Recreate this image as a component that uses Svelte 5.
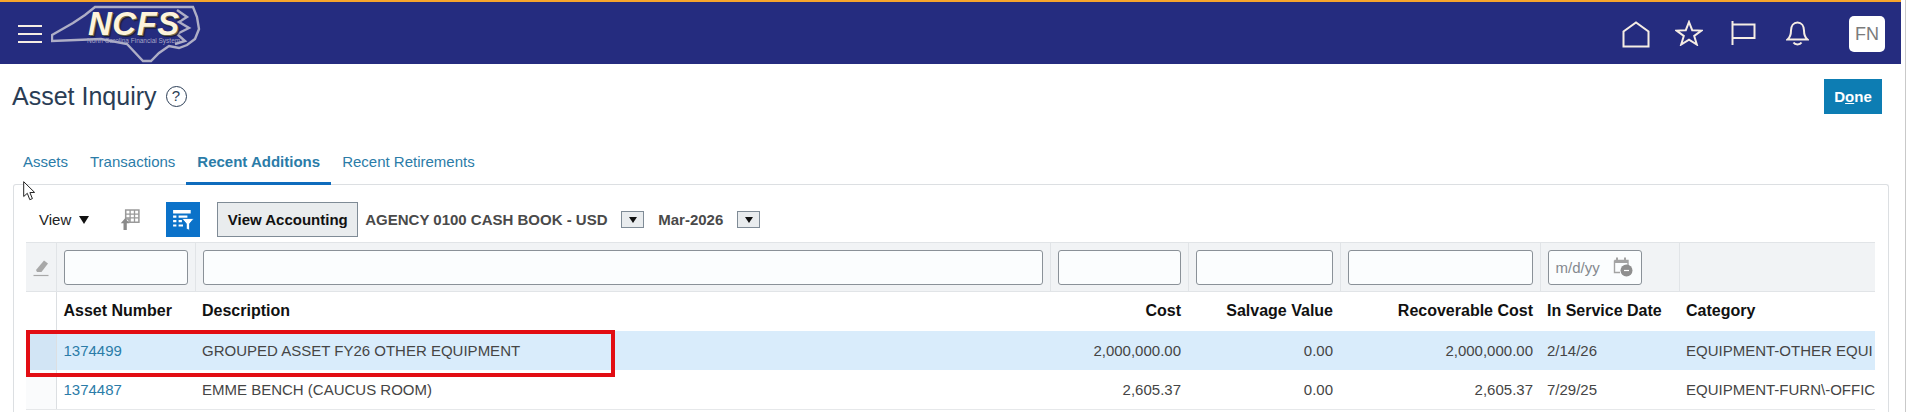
<script>
  const tabs = [
    { label: 'Assets' },
    { label: 'Transactions' },
    { label: 'Recent Additions', active: true },
    { label: 'Recent Retirements' }
  ]

  const columns = [
    { key: 'number', label: 'Asset Number', width: 139 },
    { key: 'description', label: 'Description', width: 855 },
    { key: 'cost', label: 'Cost', width: 138, right: true },
    { key: 'salvage', label: 'Salvage Value', width: 152, right: true },
    { key: 'recoverable', label: 'Recoverable Cost', width: 200, right: true },
    { key: 'date', label: 'In Service Date', width: 139, isDate: true },
    { key: 'category', label: 'Category', width: 196 }
  ]

  const rows = [
    {
      number: '1374499',
      description: 'GROUPED ASSET FY26 OTHER EQUIPMENT',
      cost: '2,000,000.00',
      salvage: '0.00',
      recoverable: '2,000,000.00',
      date: '2/14/26',
      category: 'EQUIPMENT-OTHER EQUI',
      selected: true
    },
    {
      number: '1374487',
      description: 'EMME BENCH (CAUCUS ROOM)',
      cost: '2,605.37',
      salvage: '0.00',
      recoverable: '2,605.37',
      date: '7/29/25',
      category: 'EQUIPMENT-FURN\\-OFFIC'
    }
  ]
</script>

<div class="page">
  <header class="topbar">
    <button class="burger" aria-label="Menu"><span></span><span></span><span></span></button>
    <div class="logo">
      <svg class="map" viewBox="0 0 150 60" width="150" height="60" aria-hidden="true">
        <path d="M1 32 L8 28 L22 20 L34 12 L44 4 L142 4 L146 14 L148 26 L144 36 L136 42 L128 45 L118 43 L108 50 L100 58 L92 58 L76 41 L50 36 L1 38 Z" fill="none" stroke="#aeaec6" stroke-width="2.4" />
        <path d="M126 7 L136 14 L128 19 L138 25 L126 31 L134 38 L124 41" fill="none" stroke="#aeaec6" stroke-width="2.4" />
      </svg>
      <span class="ncfs">NCFS</span>
      <span class="tagline">North Carolina Financial System</span>
    </div>
    <nav class="actions">
      <svg class="home" viewBox="0 0 28 27" width="28" height="27" aria-hidden="true">
        <path d="M1.5 25.5 V10.5 L14 1.5 L26.5 10.5 V25.5 Z" />
      </svg>
      <svg class="star" viewBox="0 0 28 26" width="28" height="26" aria-hidden="true">
        <path d="M14 2 L17.2 10.2 L26.5 10.6 L19.2 16 L21.8 24.5 L14 19.6 L6.2 24.5 L8.8 16 L1.5 10.6 L10.8 10.2 Z" />
      </svg>
      <svg class="flag" viewBox="0 0 25 24" width="25" height="24" aria-hidden="true">
        <path d="M1.5 0 V24 M1.5 3.5 H23.5 V17 H1.5" />
      </svg>
      <svg class="bell" viewBox="0 0 23 25" width="23" height="25" aria-hidden="true">
        <path d="M1.5 18.5 H21.5 C18.5 16 18 13 18 9.5 C18 5 15.5 1.5 11.5 1.5 C7.5 1.5 5 5 5 9.5 C5 13 4.5 16 1.5 18.5 Z M7.5 21.5 C9 24 14 24 15.5 21.5" />
      </svg>
      <span class="avatar">FN</span>
    </nav>
  </header>

  <div class="title-row">
    <h1>Asset Inquiry <span class="help">?</span></h1>
    <button class="done">D<u>o</u>ne</button>
  </div>

  <ul class="tabs">
    {#each tabs as tab}
      <li class:active={tab.active}>{tab.label}</li>
    {/each}
  </ul>

  <section class="panel">
    <div class="toolbar">
      <span class="view">View <i class="caret"></i></span>
      <svg class="detach" viewBox="0 0 20 20" width="22" height="22" aria-hidden="true">
        <path d="M7 1 H19 V12 H10 V9 H7 Z" fill="none" stroke="#9a9a9a" stroke-width="1.4" />
        <path d="M7 4.6 H19 M7 8 H19 M11 1 V12 M15 1 V12" stroke="#9a9a9a" stroke-width="1.2" />
        <path d="M1 19 H5 V13 H2.5 L6.5 8.5 L10.5 13 H8 V19" fill="#8a8a8a" />
      </svg>
      <button class="filter" aria-label="Query by example">
        <svg viewBox="0 0 20 20" width="22" height="22" aria-hidden="true">
          <path d="M1 1 H17 V4 H1 Z M1 6 H4 V8 H1 Z M6 6 H14 V8 H6 Z M1 10 H4 V12 H1 Z M6 10 H9 V12 H6 Z M1 14 H4 V16 H1 Z M6 14 H10 V16 H6 Z" fill="#fff" />
          <path d="M9 8.6 H20 L16 13.4 V19.5 L13 18 V13.4 Z" fill="#fff" stroke="#0b72c9" stroke-width="0.8" />
        </svg>
      </button>
      <button class="accounting">View Accounting</button>
      <span class="choice book">AGENCY 0100 CASH BOOK - USD</span>
      <button class="select" aria-label="Choose book"><i class="caret"></i></button>
      <span class="choice period">Mar-2026</span>
      <button class="select" aria-label="Choose period"><i class="caret"></i></button>
    </div>

    <div class="table-wrap">
      <table>
        <colgroup>
          <col style="width: 30px" />
          {#each columns as col}
            <col style="width: {col.width}px" />
          {/each}
        </colgroup>
        <thead>
          <tr class="filters">
            <th class="gutter">
              <svg viewBox="0 0 16 18" width="16" height="18" aria-hidden="true">
                <path d="M3 11 L11 1.5 L15 4.5 L8.5 13 H4 Z" fill="#a8a8a8" />
                <path d="M0.5 16.5 H15.5" stroke="#a8a8a8" stroke-width="1.2" />
              </svg>
            </th>
            {#each columns as col}
              <th>
                {#if col.isDate}
                  <div class="date-box">
                    <span>m/d/yy</span>
                    <svg viewBox="0 0 20 20" width="20" height="20" aria-hidden="true">
                      <path d="M1.5 3.5 H15 V8 M1.5 3.5 V15.5 H7" fill="none" stroke="#a3a3a3" stroke-width="1.4" />
                      <path d="M4 0.5 V4 M12 0.5 V4" stroke="#a3a3a3" stroke-width="2" />
                      <path d="M1.5 3.5 H15 V6 H1.5 Z" fill="#a3a3a3" />
                      <circle cx="13.5" cy="13.5" r="6" fill="#8f8f8f" />
                      <path d="M11 13.5 H16" stroke="#fff" stroke-width="1.2" />
                    </svg>
                  </div>
                {:else if col.key !== 'category'}
                  <div class="filter-box"></div>
                {/if}
              </th>
            {/each}
          </tr>
          <tr class="heads">
            <th class="gutter"></th>
            {#each columns as col}
              <th class:right={col.right}>{col.label}</th>
            {/each}
          </tr>
        </thead>
        <tbody>
          {#each rows as row}
            <tr class:selected={row.selected}>
              <td class="gutter"></td>
              {#each columns as col}
                <td class:right={col.right} class:link={col.key === 'number'}>{row[col.key]}</td>
              {/each}
            </tr>
          {/each}
        </tbody>
      </table>
      <div class="callout"></div>
    </div>
  </section>

  <svg class="cursor" viewBox="0 0 13 20" width="13" height="20" aria-hidden="true">
    <path d="M0.7 0.7 V15.5 L4.3 12.3 L6.8 18.7 L9.4 17.6 L6.9 11.6 L11.6 11.4 Z" fill="#fff" stroke="#222" stroke-width="1" />
  </svg>
</div>

<style>
  :global(body) {
    margin: 0;
    background: #fff;
    overflow: hidden;
  }

  .page {
    position: relative;
    width: 1901px;
    height: 412px;
    overflow: hidden;
    display: flex;
    flex-direction: column;
    font-family: "Liberation Sans", Arial, sans-serif;
    font-size: 15px;
    box-shadow: 4px 0 0 #fff, 5px 0 0 #c9c9c9;
  }

  button {
    font-family: inherit;
    padding: 0;
  }

  .topbar {
    flex: none;
    box-sizing: border-box;
    height: 64px;
    border-top: 2px solid #f8a52c;
    background: #252c7f;
    display: flex;
    align-items: center;
    padding-left: 18px;
  }

  .burger {
    width: 24px;
    height: 19px;
    margin-top: 2px;
    background: none;
    border: 0;
    display: flex;
    flex-direction: column;
    justify-content: space-between;
  }

  .burger span {
    display: block;
    height: 2.4px;
    background: #f6ede4;
  }

  .logo {
    position: relative;
    width: 150px;
    height: 60px;
    margin-left: 9px;
    margin-top: 0;
  }

  .map {
    position: absolute;
    left: 0;
    top: 0;
  }

  .ncfs {
    position: absolute;
    left: 37px;
    top: 7px;
    font: italic bold 33px/27px "Liberation Sans", Arial, sans-serif;
    letter-spacing: 0.5px;
    color: #fdf3dc;
    text-shadow: 1px 1px 0 #6f6a4a, 2px 2px 1px #1a1a3a;
  }

  .tagline {
    position: absolute;
    left: 36px;
    top: 34px;
    font-size: 6.5px;
    line-height: 7px;
    white-space: nowrap;
    color: #a5a5c5;
  }

  .actions {
    margin-left: auto;
    margin-right: 16px;
    display: flex;
    align-items: center;
  }

  .actions svg {
    fill: none;
    stroke: #f6ede4;
    stroke-width: 2;
  }

  .home { margin-top: 2px; }
  .star { margin-left: 25px; }
  .flag { margin-left: 28px; }
  .bell { margin-left: 30px; }

  .avatar {
    width: 36px;
    height: 36px;
    margin-left: 40px;
    margin-top: 2px;
    border-radius: 5px;
    background: #fff;
    color: #7b7b7b;
    font: 18px "Liberation Sans", Arial, sans-serif;
    display: flex;
    align-items: center;
    justify-content: center;
  }

  .title-row {
    flex: none;
    display: flex;
    justify-content: space-between;
    align-items: flex-start;
    padding: 15px 19px 0 12px;
  }

  h1 {
    margin: 0;
    font-size: 25px;
    line-height: 35px;
    font-weight: 400;
    color: #2a3d55;
    display: flex;
    align-items: center;
    gap: 9px;
  }

  .help {
    box-sizing: border-box;
    width: 21px;
    height: 21px;
    border: 1.5px solid #2a3d55;
    border-radius: 50%;
    font-size: 15px;
    line-height: 18px;
    text-align: center;
  }

  .done {
    width: 58px;
    height: 35px;
    border: 0;
    background: #0d7db3;
    color: #fff;
    font-size: 15px;
    font-weight: 700;
  }

  .tabs {
    flex: none;
    list-style: none;
    margin: 37px 0 -1px;
    padding: 0 0 0 12px;
    display: flex;
    position: relative;
    z-index: 1;
  }

  .tabs li {
    padding: 0 11px;
    height: 34px;
    line-height: 22px;
    box-sizing: border-box;
    color: #2b7ca8;
    border-bottom: 3px solid transparent;
  }

  .tabs li.active {
    font-weight: 700;
    border-bottom-color: #0f6cbd;
  }

  .panel {
    flex: 1;
    box-sizing: border-box;
    margin: 0 12px 0 13px;
    padding: 17px 13px 0 12px;
    border: 1px solid #dcdfe2;
    border-bottom: 0;
    border-radius: 3px 3px 0 0;
  }

  .toolbar {
    height: 35px;
    display: flex;
    align-items: center;
    color: #111;
  }

  .view {
    margin-left: 13px;
    display: flex;
    align-items: center;
    gap: 8px;
    color: #222;
  }

  .caret {
    display: block;
    width: 0;
    height: 0;
    border-left: 5.5px solid transparent;
    border-right: 5.5px solid transparent;
    border-top: 8px solid #111;
  }

  .detach {
    margin-left: 29px;
  }

  .filter {
    width: 34px;
    height: 35px;
    margin-left: 26px;
    border: 0;
    background: #0b72c9;
    display: flex;
    align-items: center;
    justify-content: center;
  }

  .accounting {
    width: 141px;
    height: 35px;
    margin-left: 17px;
    border: 1px solid #7f8b96;
    background: #e9ecee;
    color: #111;
    font-size: 15px;
    font-weight: 700;
  }

  .choice {
    font-weight: 700;
    color: #4a4a4a;
    white-space: nowrap;
  }

  .book {
    margin-left: 7px;
    width: 256px;
  }

  .period {
    margin-left: 14px;
    width: 79px;
  }

  .select {
    width: 23px;
    height: 17px;
    border: 1px solid #7f8b96;
    background: #e9ecee;
    display: flex;
    align-items: center;
    justify-content: center;
  }

  .select .caret {
    border-left-width: 4.5px;
    border-right-width: 4.5px;
    border-top-width: 6px;
  }

  .table-wrap {
    position: relative;
    margin-top: 5px;
  }

  table {
    width: 1849px;
    table-layout: fixed;
    border-collapse: collapse;
  }

  th, td {
    box-sizing: border-box;
    padding: 0 7px;
    white-space: nowrap;
    overflow: hidden;
    text-align: left;
  }

  th:last-child, td:last-child {
    padding-right: 0;
  }

  .right {
    text-align: right;
  }

  .filters th {
    height: 49px;
    background: #f1f3f5;
    border: 1px solid #e1e4e7;
    border-width: 1px 1px 1px 0;
    padding: 0 7px;
  }

  .filters th:first-child {
    border-left: 0;
  }

  .filters th:last-child {
    border-right: 0;
  }

  .filters svg {
    display: block;
  }

  .filters .gutter svg {
    margin: 1px auto 0;
  }

  .filter-box, .date-box {
    box-sizing: border-box;
    height: 35px;
    border: 1px solid #8a9198;
    border-radius: 3px;
    background: #fbfdfe;
  }

  .date-box {
    width: 94px;
    display: flex;
    align-items: center;
    justify-content: space-between;
    padding: 0 8px 0 7px;
    color: #84898e;
    font-weight: 400;
  }

  .heads th {
    height: 39px;
    color: #111;
    font-size: 16px;
    font-weight: 700;
    border-bottom: 0;
  }

  td {
    height: 39px;
    color: #454545;
    border-bottom: 1px solid #e6e8ea;
  }

  tbody tr:first-child td {
    border-bottom: 0;
  }

  tbody tr:last-child td {
    height: 40px;
    padding-top: 1px;
  }

  .gutter {
    padding: 0;
    border-right: 1px solid #dcdfe2;
  }

  td.gutter {
    background: #fafbfc;
  }

  .selected td {
    background: #d9ecfb;
  }

  .selected td.gutter {
    background: #d2e5f5;
  }

  .link {
    color: #2b7ca8;
  }

  .callout {
    position: absolute;
    left: 0;
    top: 88px;
    width: 589px;
    height: 47px;
    box-sizing: border-box;
    border: 4px solid #e20d13;
  }

  .cursor {
    position: absolute;
    left: 23px;
    top: 181px;
    z-index: 2;
  }
</style>
